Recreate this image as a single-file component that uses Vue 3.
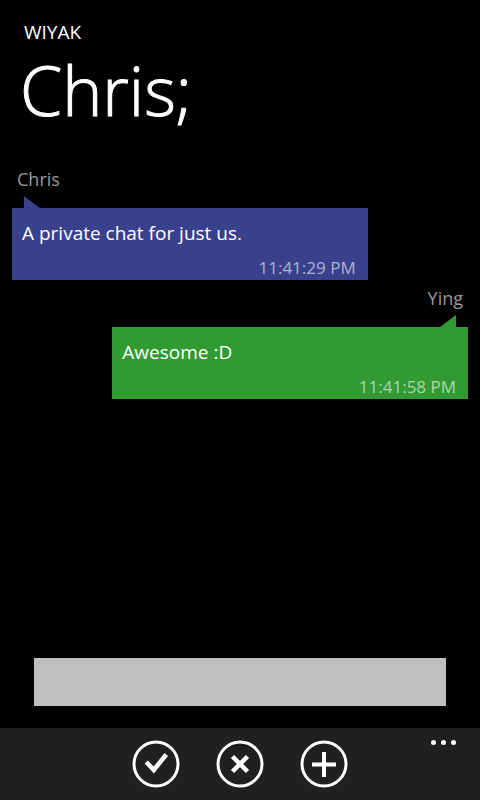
<script setup>
import { ref } from 'vue'

const draft = ref('')

const messages = [
  { id: 1, author: 'Chris', text: 'A private chat for just us.', time: '11:41:29 PM', mine: false },
  { id: 2, author: 'Ying', text: 'Awesome :D', time: '11:41:58 PM', mine: true },
]
</script>

<template>
  <div class="page">
    <header class="header">
      <p class="app-name">WIYAK</p>
      <h1 class="title">Chris;</h1>
    </header>

    <main class="messages">
      <article v-for="m in messages" :key="m.id" class="message" :class="{ mine: m.mine }">
        <p class="author">{{ m.author }}</p>
        <svg class="tail" viewBox="0 0 16 12" aria-hidden="true"><path d="M0 0 16 12H0Z" /></svg>
        <div class="bubble">
          <p class="text">{{ m.text }}</p>
          <time class="time">{{ m.time }}</time>
        </div>
      </article>
    </main>

    <form class="composer" @submit.prevent>
      <input v-model="draft" class="field" type="text" aria-label="Message" />
    </form>

    <footer class="bar">
      <button class="action" type="button" aria-label="Send">
        <svg viewBox="0 0 48 48"><circle cx="24" cy="24" r="22" /><path class="mark heavy" d="M14.300 22 21.800 30 34.300 14.500" /></svg>
      </button>
      <button class="action" type="button" aria-label="Cancel">
        <svg viewBox="0 0 48 48"><circle cx="24" cy="24" r="22" /><path class="mark heavy" d="M16.500 16.500 31.500 31.500M31.500 16.500 16.500 31.500" /></svg>
      </button>
      <button class="action" type="button" aria-label="Add">
        <svg viewBox="0 0 48 48"><circle cx="24" cy="24" r="22" /><path class="mark" d="M24 12V37M12 24.500H36" /></svg>
      </button>
      <button class="more" type="button" aria-label="More">
        <svg viewBox="0 0 26 6"><circle cx="3.500" cy="2.500" r="2.500" /><circle cx="13.500" cy="2.500" r="2.500" /><circle cx="23.500" cy="2.500" r="2.500" /></svg>
      </button>
    </footer>
  </div>
</template>

<style>
body {
  background: #000;
}
</style>

<style scoped>
.page {
  display: flex;
  flex-direction: column;
  min-height: 100vh;
  background: #000;
  color: #fff;
  font-family: "Open Sans", "Noto Sans", sans-serif;
  font-size: 19px;
  line-height: 24px;
}

p,
h1 {
  margin: 0;
}

.header {
  padding: 20px 20px 0;
}

.app-name {
  padding: 0 4px;
}

.title {
  font-size: 68px;
  font-weight: 300;
  line-height: 92px;
  -webkit-text-stroke: 1px #fff;
}

.messages {
  flex: 1;
  display: flex;
  flex-direction: column;
  gap: 6px;
  padding: 31px 12px 0;
}

.message {
  display: flex;
  flex-direction: column;
  width: 78%;
}

.mine {
  align-self: flex-end;
}

.author {
  padding: 0 5px;
  color: #999;
  font-size: 18px;
}

.tail {
  width: 16px;
  height: 12px;
  margin: 5px 12px 0;
  fill: #39418c;
}

.bubble {
  display: flex;
  flex-direction: column;
  padding: 13px 12px 0 10px;
  background: #39418c;
}

.time {
  align-self: flex-end;
  margin-top: 11px;
  color: rgba(255, 255, 255, 0.6);
  font-size: 17px;
}

.mine .author {
  align-self: flex-end;
}

.mine .tail {
  align-self: flex-end;
  transform: scaleX(-1);
  fill: #319a31;
}

.mine .bubble {
  background: #319a31;
}

.composer {
  padding: 22px 34px;
}

.field {
  display: block;
  box-sizing: border-box;
  width: 100%;
  height: 48px;
  padding: 0 10px;
  border: 0;
  border-radius: 0;
  background: #bfbfbf;
  color: #000;
  font: inherit;
}

.bar {
  position: relative;
  display: flex;
  justify-content: center;
  gap: 36px;
  padding: 12px 0;
  background: #212021;
}

button {
  padding: 0;
  border: 0;
  background: none;
}

button svg {
  display: block;
  width: 100%;
}

.action {
  width: 48px;
  height: 48px;
  fill: none;
  stroke: #fff;
  stroke-width: 3;
}

.mark {
  stroke-width: 4;
}

.heavy {
  stroke-width: 4.5;
}

.more {
  position: absolute;
  top: 12px;
  right: 24px;
  width: 26px;
  fill: #fff;
}
</style>
